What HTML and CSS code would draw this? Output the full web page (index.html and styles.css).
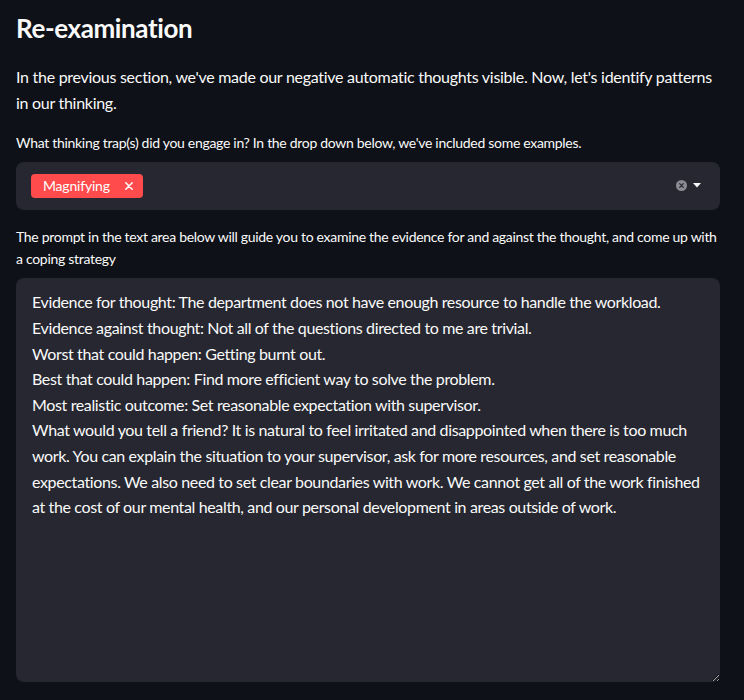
FILE: index.html
```html
<!DOCTYPE html>
<html lang="en">
<head>
<meta charset="utf-8">
<title>Re-examination</title>
<link rel="stylesheet" href="styles.css">
</head>
<body>
<main class="page">
  <h1 class="title">Re-examination</h1>
  <p class="intro">In the previous section, we've made our negative automatic thoughts visible. Now, let's identify patterns in our thinking.</p>

  <label class="field-label">What thinking trap(s) did you engage in? In the drop down below, we've included some examples.</label>
  <div class="select">
    <div class="select-values">
      <span class="tag">Magnifying
        <svg class="tag-x" viewBox="0 0 8 8" width="8" height="8"><path d="M0.8 0.8 L7.2 7.2 M7.2 0.8 L0.8 7.2" stroke="#fff" stroke-width="1.5" stroke-linecap="round"/></svg>
      </span>
    </div>
    <div class="select-icons">
      <svg class="clear" viewBox="0 0 12 12" width="11" height="11"><circle cx="6" cy="6" r="6" fill="#8b8c93"/><path d="M4 4 L8 8 M8 4 L4 8" stroke="#262730" stroke-width="1.3" stroke-linecap="round"/></svg>
      <svg class="caret" viewBox="0 0 8 5" width="8" height="5"><path d="M0 0 H8 L4 4.5 Z" fill="#fafafa"/></svg>
    </div>
  </div>

  <label class="field-label label-2">The prompt in the text area below will guide you to examine the evidence for and against the thought, and come up with a coping strategy</label>
  <textarea class="area" spellcheck="false">Evidence for thought: The department does not have enough resource to handle the workload.
Evidence against thought: Not all of the questions directed to me are trivial.
Worst that could happen: Getting burnt out.
Best that could happen: Find more efficient way to solve the problem.
Most realistic outcome: Set reasonable expectation with supervisor.
What would you tell a friend? It is natural to feel irritated and disappointed when there is too much work. You can explain the situation to your supervisor, ask for more resources, and set reasonable expectations. We also need to set clear boundaries with work. We cannot get all of the work finished at the cost of our mental health, and our personal development in areas outside of work.</textarea>
</main>
</body>
</html>
```

FILE: styles.css
```css
html, body {
  margin: 0;
  padding: 0;
  background: #0e1117;
}
body {
  color: #fafafa;
  font-family: Lato, "Noto Sans", sans-serif;
  color-scheme: dark;
}
.page {
  padding: 0 24px 0 16px;
  display: flex;
  flex-direction: column;
}
.title {
  margin: 0;
  padding-top: 13px;
  font-size: 26px;
  line-height: 31px;
  font-weight: 700;
  letter-spacing: -0.4px;
}
.intro {
  margin: 20px 0 0;
  font-size: 16px;
  line-height: 25.6px;
  letter-spacing: -0.28px;
}
.field-label {
  margin-top: 17px;
  font-size: 14px;
  line-height: 22.4px;
  letter-spacing: -0.3px;
}
.label-2 {
  margin-top: 16px;
}
.select {
  margin-top: 7px;
  height: 48px;
  box-sizing: border-box;
  background: #262730;
  border-radius: 8px;
  display: flex;
  align-items: center;
  padding: 0 15px;
}
.select-values {
  flex: 1;
  display: flex;
}
.tag {
  display: inline-flex;
  align-items: center;
  gap: 15px;
  height: 24px;
  padding: 0 10px 0 12px;
  background: #ff4b4b;
  border-radius: 4px;
  font-size: 14px;
  letter-spacing: -0.2px;
  color: #fff;
}
.tag-x {
  display: block;
}
.select-icons {
  display: flex;
  align-items: center;
  gap: 6px;
  padding-right: 4px;
}
.clear, .caret {
  display: block;
}
.area {
  margin-top: 8px;
  height: 404px;
  box-sizing: border-box;
  background: #262730;
  color: #fafafa;
  border: none;
  border-radius: 8px;
  padding: 11px 16px;
  font-family: Lato, "Noto Sans", sans-serif;
  font-size: 16px;
  line-height: 25.6px;
  letter-spacing: -0.36px;
  resize: vertical;
  outline: none;
}
```
